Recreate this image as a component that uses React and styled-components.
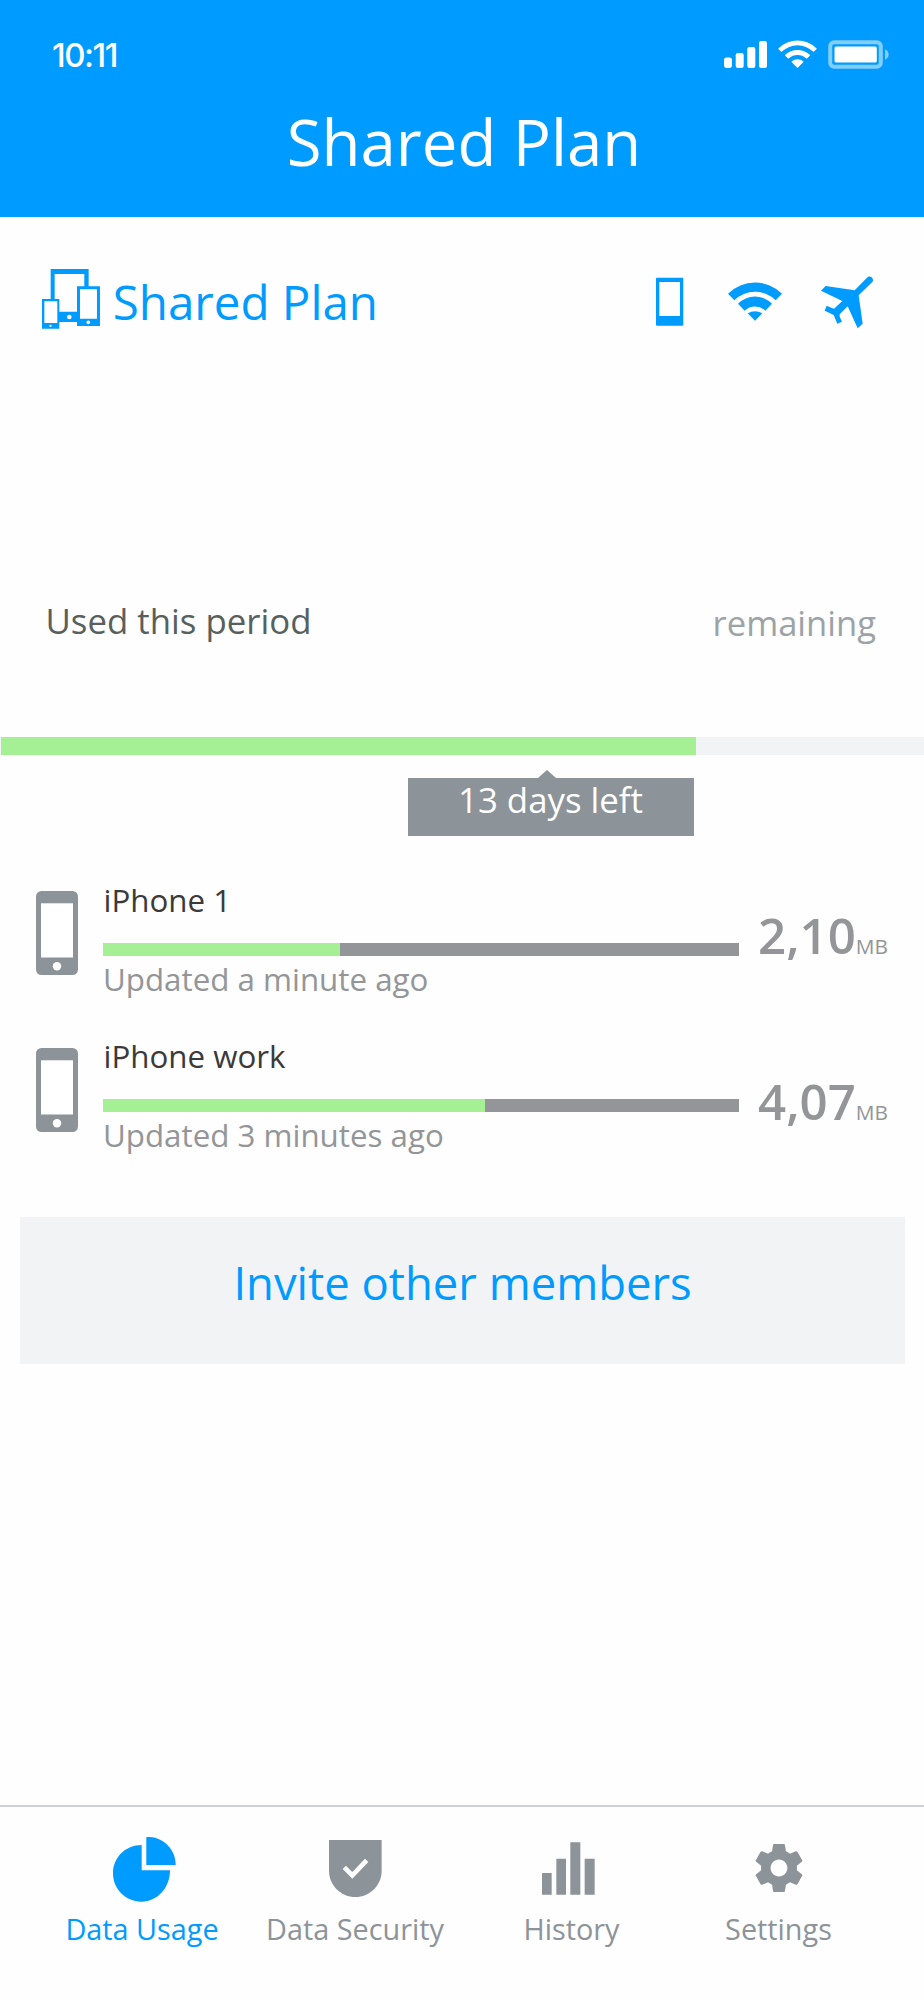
import React from 'react'
import styled, { createGlobalStyle } from 'styled-components'

const devices = [
    { name: 'iPhone 1', updated: 'Updated a minute ago', value: '2,10', used: 37.2, iconTop: 11, valueTop: 25 },
    { name: 'iPhone work', updated: 'Updated 3 minutes ago', value: '4,07', used: 60, iconTop: 12, valueTop: 35 },
]

function SignalIcon() {
    return (
        <svg width="43" height="28" viewBox="0 0 43 28" fill="currentColor">
            <rect x="0" y="17.5" width="8" height="10.5" rx="2.4" />
            <rect x="11.7" y="13" width="8" height="15" rx="2.2" />
            <rect x="23.3" y="7" width="8" height="21" rx="2.2" />
            <rect x="35" y="1" width="8" height="27" rx="2.2" />
        </svg>
    )
}

function StatusWifiIcon() {
    return (
        <svg width="39" height="28" viewBox="0 0 39 28" fill="currentColor">
            <path d="M0.6 8.2 A27 27 0 0 1 38.4 8.2 Q38.8 8.7 38.4 9.2 L36 11.6 Q35.5 12 35 11.6 A22.4 22.4 0 0 0 4 11.6 Q3.5 12 3 11.6 L0.6 9.2 Q0.2 8.7 0.6 8.2Z" />
            <path d="M7.2 14.8 A17.9 17.9 0 0 1 31.8 14.8 Q32.2 15.3 31.8 15.8 L29.2 18.3 Q28.7 18.7 28.2 18.3 A13 13 0 0 0 10.8 18.3 Q10.3 18.7 9.8 18.3 L7.2 15.8 Q6.8 15.3 7.2 14.8Z" />
            <path d="M13.8 21.3 A9.2 9.2 0 0 1 25.2 21.3 Q25.7 21.8 25.2 22.3 L20 27.4 Q19.5 27.9 19 27.4 L13.8 22.3 Q13.3 21.8 13.8 21.3Z" />
        </svg>
    )
}

function BatteryIcon() {
    return (
        <svg width="61" height="29" viewBox="0 0 61 29" fill="currentColor">
            <rect x="2.2" y="2.2" width="50.6" height="24.6" rx="4" fill="none" stroke="currentColor" strokeWidth="4" opacity="0.5" />
            <rect x="6.5" y="6.5" width="42.3" height="16" rx="1.5" />
            <path d="M57 9.2 Q60.6 11 60.6 14.5 Q60.6 18 57 19.8Z" opacity="0.5" />
        </svg>
    )
}

function SharedDevicesIcon() {
    return (
        <svg width="58.3" height="60" viewBox="64 57 175 180" fill="currentColor">
            <path fillRule="evenodd" d="M90 57H204V109H238V228H169V216H116V236H64V147H90Z M102 72V147H116V185H169V109H191V72Z M178 118V206H229V118Z M71 154V219H110V154Z" />
            <circle cx="146" cy="201" r="7" fill="#fff" />
            <circle cx="203" cy="217" r="5.5" fill="#fff" />
            <circle cx="89.5" cy="227.5" r="3.5" fill="#fff" />
        </svg>
    )
}

function HandsetIcon() {
    return (
        <svg width="27.3" height="60" viewBox="78 57 82 180" fill="currentColor">
            <path fillRule="evenodd" d="M80 83H158L160 85V225L158 227H80L78 225V85Z M88 96V198H150V96Z" />
        </svg>
    )
}

function WifiIcon() {
    return (
        <svg width="54" height="60" viewBox="294 57 162 180" fill="currentColor">
            <path d="M294 131A115 115 0 0 1 456 131L437 151A88 88 0 0 0 313 151Z" />
            <path d="M324 161A72 72 0 0 1 426 161L406 182A44 44 0 0 0 344 182Z" />
            <path d="M353 190Q375 178 397 190L375 212Z" />
        </svg>
    )
}

function PlaneIcon() {
    return (
        <svg width="52" height="60" viewBox="573 57 156 180" fill="currentColor">
            <path d="M573 122L587 108L674 121L711 83Q718 76 725 82Q732 89 727 96L686 136L698 221L683 235L653 169L629 193V200L636 215L622 221L611 195L584 182L590 167L604 173L612 176L637 153Z" />
        </svg>
    )
}

function PhoneIcon() {
    return (
        <svg width="42" height="84" viewBox="0 0 42 84">
            <rect width="42" height="84" rx="5.5" fill="#8c9399" />
            <rect x="5" y="12.3" width="32" height="54.2" fill="#fff" />
            <circle cx="21" cy="75.2" r="4.2" fill="#fff" />
        </svg>
    )
}

function PieIcon() {
    return (
        <svg width="63" height="65" viewBox="220 141 189 195" fill="currentColor">
            <path d="M306 165V241H391C391 292 355 335 305 335C257 335 220 297 220 250C220 203 257 165 306 165Z" />
            <path d="M320 141C370 138 408 178 408 225H320Z" />
        </svg>
    )
}

function ShieldIcon() {
    return (
        <svg width="53" height="57" viewBox="867 149 159 171">
            <path d="M867 149H1025V241C1025 285 989 320 946 320C903 320 867 285 867 241Z" fill="currentColor" />
            <path d="M913 231L937 255L980 210" fill="none" stroke="#fff" strokeWidth="14" />
        </svg>
    )
}

function ChartIcon() {
    return (
        <svg width="53" height="53" viewBox="187 155 159 159" fill="currentColor">
            <path d="M187 248H216V313H187Z M230 205H259V313H230Z M272 156H302V313H272Z M315 205H345V313H315Z" />
        </svg>
    )
}

function GearIcon() {
    return (
        <svg width="48" height="48" viewBox="2 2 20 20" fill="currentColor">
            <path d="M19.43 12.98c.04-.32.07-.64.07-.98s-.03-.66-.07-.98l2.11-1.65c.19-.15.24-.42.12-.64l-2-3.46c-.12-.22-.39-.3-.61-.22l-2.49 1c-.52-.4-1.08-.73-1.69-.98l-.38-2.65C14.46 2.18 14.25 2 14 2h-4c-.25 0-.46.18-.49.42l-.38 2.65c-.61.25-1.17.59-1.69.98l-2.49-1c-.23-.09-.49 0-.61.22l-2 3.46c-.13.22-.07.49.12.64l2.11 1.65c-.04.32-.07.65-.07.98s.03.66.07.98l-2.11 1.65c-.19.15-.24.42-.12.64l2 3.46c.12.22.39.3.61.22l2.49-1c.52.4 1.08.73 1.69.98l.38 2.65c.03.24.24.42.49.42h4c.25 0 .46-.18.49-.42l.38-2.65c.61-.25 1.17-.59 1.69-.98l2.49 1c.23.09.49 0 .61-.22l2-3.46c.12-.22.07-.49-.12-.64l-2.11-1.65zM12 15.5c-1.93 0-3.5-1.57-3.5-3.5s1.57-3.5 3.5-3.5 3.5 1.57 3.5 3.5-1.57 3.5-3.5 3.5z" />
        </svg>
    )
}

function Device(props) {
    return (
        <DeviceRow>
            <DeviceIcon $top={props.iconTop}>
                <PhoneIcon />
            </DeviceIcon>
            <DeviceInfo>
                <DeviceName>{props.name}</DeviceName>
                <DeviceTrack>
                    <DeviceFill style={{ width: `${props.used}%` }} />
                </DeviceTrack>
                <DeviceUpdated>{props.updated}</DeviceUpdated>
            </DeviceInfo>
            <DeviceValue $top={props.valueTop}>
                {props.value}<small>MB</small>
            </DeviceValue>
        </DeviceRow>
    )
}

function App() {
    return (
        <Screen>
            <GlobalStyle />
            <Header>
                <StatusBar>
                    <Time>10:11</Time>
                    <StatusIcons>
                        <SignalIcon />
                        <StatusWifiIcon />
                        <BatteryIcon />
                    </StatusIcons>
                </StatusBar>
                <Title>Shared Plan</Title>
            </Header>

            <PlanRow>
                <SharedDevicesIcon />
                <PlanName>Shared Plan</PlanName>
                <PlanIcons>
                    <HandsetIcon />
                    <WifiIcon />
                    <PlaneIcon />
                </PlanIcons>
            </PlanRow>

            <PeriodRow>
                <Used>Used this period</Used>
                <Remaining>remaining</Remaining>
            </PeriodRow>
            <PeriodTrack>
                <PeriodFill />
            </PeriodTrack>
            <DaysLeft>13 days left</DaysLeft>

            <DeviceList>
                {devices.map((device) => (
                    <Device key={device.name} {...device} />
                ))}
            </DeviceList>

            <InviteButton>Invite other members</InviteButton>

            <TabBar>
                <Tab $active>
                    <TabIcon $down={1.5} $right={2.5}><PieIcon /></TabIcon>
                    Data Usage
                </Tab>
                <Tab>
                    <TabIcon><ShieldIcon /></TabIcon>
                    Data Security
                </Tab>
                <Tab>
                    <TabIcon $left={3}><ChartIcon /></TabIcon>
                    History
                </Tab>
                <Tab>
                    <TabIcon><GearIcon /></TabIcon>
                    Settings
                </Tab>
            </TabBar>
        </Screen>
    )
}

export default App

const GlobalStyle = createGlobalStyle`
    * {
        box-sizing:border-box;
    }
    body {
        margin:0;
        background:#fefefe;
    }
    svg {
        display:block;
        flex-shrink:0;
    }
`
const Screen = styled.div`
    width:924px;
    height:2000px;
    display:flex;
    flex-direction:column;
    overflow:hidden;
    background:#fefefe;
    font-family:"Open Sans", "Noto Sans", sans-serif;
    white-space:nowrap;
`
const Header = styled.header`
    height:217px;
    flex-shrink:0;
    background:#009bff;
    color:#fff;
`
const StatusBar = styled.div`
    height:102px;
    padding:37px 35px 0 52px;
    display:flex;
    justify-content:space-between;
    align-items:flex-start;
`
const Time = styled.div`
    font-family:Inter, sans-serif;
    font-size:33px;
    font-weight:500;
    line-height:36px;
    letter-spacing:-1.5px;
`
const StatusIcons = styled.div`
    display:flex;
    gap:11px;
    padding-top:3px;
`
const Title = styled.h1`
    margin:0;
    padding-left:4px;
    font-size:63.5px;
    font-weight:400;
    line-height:80px;
    text-align:center;
`
const PlanRow = styled.div`
    display:flex;
    height:64px;
    margin-top:52px;
    padding:0 51px 0 41.5px;
    color:#009bff;
`
const PlanName = styled.h2`
    margin:0 0 0 13px;
    font-size:47.5px;
    font-weight:400;
    line-height:66px;
`
const PlanIcons = styled.div`
    display:flex;
    margin-left:auto;

    svg + svg {
        margin-left:44.5px;
    }
    svg:last-child {
        margin-left:39px;
    }
`
const PeriodRow = styled.div`
    display:flex;
    justify-content:space-between;
    height:140px;
    margin-top:264px;
    padding:0 48px 0 45.5px;
    font-size:34.8px;
    line-height:48px;
`
const Used = styled.span`
    color:#58605e;
`
const Remaining = styled.span`
    padding-top:2px;
    font-size:34.6px;
    color:#9ba3a7;
`
const PeriodTrack = styled.div`
    height:18px;
    flex-shrink:0;
    padding-left:1px;
    background:#f2f3f5;
`
const PeriodFill = styled.div`
    width:694.5px;
    height:18px;
    background:#a5f095;
`
const DaysLeft = styled.div`
    position:relative;
    width:286px;
    height:58px;
    flex-shrink:0;
    margin:23px 0 0 407.5px;
    background:#8c9399;
    color:#fff;
    font-size:34.8px;
    line-height:43px;
    text-align:center;

    &::before {
        content:"";
        position:absolute;
        left:130.5px;
        top:-8px;
        border:solid transparent;
        border-width:0 9px 8px;
        border-bottom-color:#8c9399;
    }
`
const DeviceList = styled.div`
    margin-top:44px;
    padding:0 36px 0 36px;
`
const DeviceRow = styled.div`
    display:flex;
    height:156px;
`
const DeviceIcon = styled.div`
    padding-top:${(props) => props.$top}px;
`
const DeviceInfo = styled.div`
    width:636px;
    margin-left:25px;
    font-size:31.3px;
    line-height:40px;
`
const DeviceName = styled.div`
    padding-left:0.5px;
    color:#3a3a3a;
`
const DeviceTrack = styled.div`
    height:13px;
    margin:23px 0 3px;
    background:#939598;
`
const DeviceFill = styled.div`
    height:100%;
    background:#a5f095;
`
const DeviceUpdated = styled.div`
    color:#939598;
`
const DeviceValue = styled.div`
    margin-left:auto;
    padding-top:${(props) => props.$top}px;
    font-size:49.2px;
    font-weight:600;
    line-height:60px;
    color:#939598;

    small {
        font-size:20.8px;
        font-weight:400;
    }
`
const InviteButton = styled.button`
    width:885px;
    height:147px;
    flex-shrink:0;
    margin:25px 0 0 20px;
    padding:0 0 18px;
    border:0;
    background:#f2f3f5;
    color:#009bff;
    font-family:inherit;
    font-size:45.4px;
    cursor:pointer;
`
const TabBar = styled.nav`
    display:grid;
    grid-template-columns:212px 214px 219px 195px;
    height:195px;
    margin-top:auto;
    padding:29px 0 0 36px;
    border-top:2px solid #d0d2d3;
`
const Tab = styled.div`
    display:flex;
    flex-direction:column;
    align-items:center;
    color:${(props) => props.$active ? '#009bff' : '#8c9399'};
    font-size:28.8px;
    line-height:40px;
`
const TabIcon = styled.div`
    height:64px;
    margin-bottom:9px;
    display:flex;
    align-items:center;
    padding-top:${(props) => (props.$down || 0) * 2}px;
    padding-left:${(props) => (props.$right || 0) * 2}px;
    padding-right:${(props) => (props.$left || 0) * 2}px;
`
